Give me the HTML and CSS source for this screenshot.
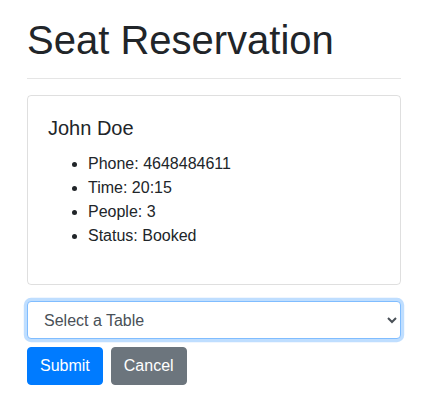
FILE: index.html
```html
<!DOCTYPE html>
<html>
<head>
<meta charset="utf-8">
<link rel="stylesheet" href="styles.css">
</head>
<body>
<div class="container">
  <h1 class="title">Seat Reservation</h1>
  <hr class="divider">
  <div class="card">
    <div class="card-body">
      <h5 class="card-title">John Doe</h5>
      <ul class="details">
        <li>Phone: 4648484611</li>
        <li>Time: 20:15</li>
        <li>People: 3</li>
        <li>Status: Booked</li>
      </ul>
    </div>
  </div>
  <select class="form-control focused">
    <option>Select a Table</option>
  </select>
  <div class="actions">
    <button class="btn btn-primary">Submit</button>
    <button class="btn btn-secondary">Cancel</button>
  </div>
</div>
</body>
</html>
```
FILE: styles.css
```css
* { box-sizing: border-box; }
html, body {
  margin: 0;
  background: #fff;
}
body {
  font-family: "Liberation Sans", Arial, sans-serif;
  font-size: 16px;
  line-height: 1.5;
  color: #212529;
}
.container {
  padding: 16px 23px 0 27px;
}
.title {
  margin: 0;
  font-size: 40px;
  font-weight: 500;
  line-height: 1.2;
}
.divider {
  margin: 14px 0 16px 0;
  border: 0;
  border-top: 1px solid rgba(0,0,0,.1);
  height: 0;
}
.card {
  border: 1px solid rgba(0,0,0,.125);
  border-radius: 4px;
  margin-bottom: 16px;
}
.card-body {
  padding: 20px;
}
.card-title {
  margin: 0 0 12px 0;
  font-size: 20px;
  font-weight: 500;
  line-height: 1.2;
}
.details {
  margin: 0 0 16px 0;
  padding-left: 40px;
}
.form-control {
  display: block;
  width: 100%;
  height: 38px;
  padding: 6px 12px;
  font-family: inherit;
  font-size: 16px;
  line-height: 1.5;
  color: #495057;
  background: #fff;
  border: 1px solid #ced4da;
  border-radius: 4px;
}
.form-control.focused {
  border-color: #80bdff;
  box-shadow: 0 0 0 3.2px rgba(0,123,255,.25);
  outline: 0;
}
.actions {
  display: flex;
  gap: 8px;
  margin-top: 8px;
}
.btn {
  font-family: inherit;
  font-size: 16px;
  line-height: 1.5;
  padding: 6px 12px;
  border: 1px solid transparent;
  border-radius: 4px;
  color: #fff;
}
.btn-primary {
  background: #007bff;
  border-color: #007bff;
}
.btn-secondary {
  background: #6c757d;
  border-color: #6c757d;
}
```
